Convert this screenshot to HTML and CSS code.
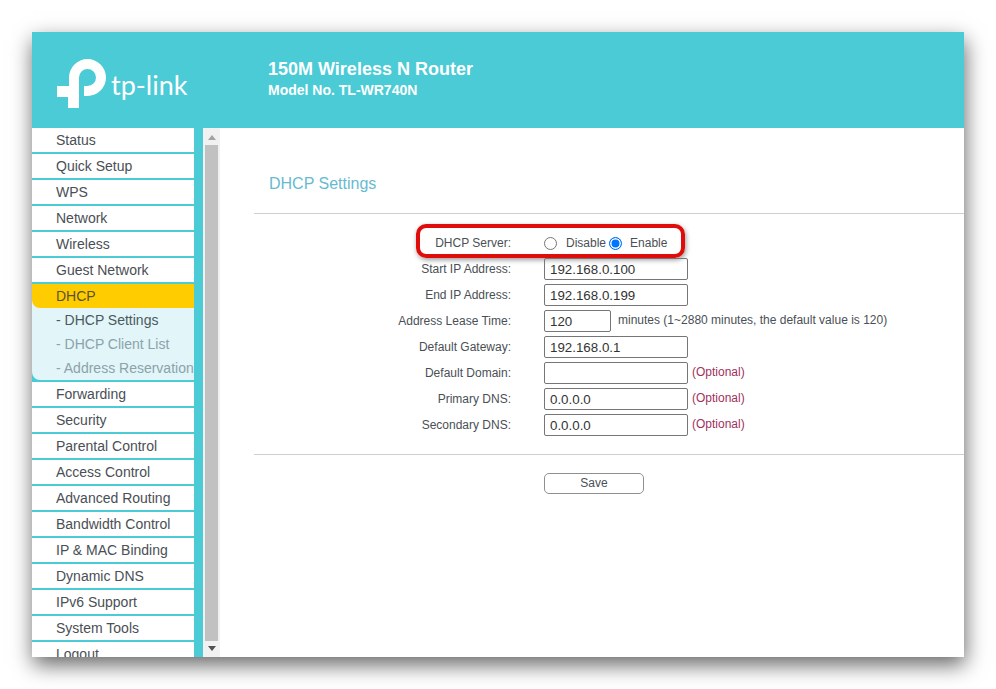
FILE: index.html
```html
<!DOCTYPE html>
<html lang="en">
<head>
<meta charset="utf-8">
<title>TL-WR740N</title>
<link rel="stylesheet" href="styles.css">
</head>
<body>
<div class="window">
  <header class="top">
    <div class="logo">
      <svg class="mark" viewBox="0 0 50 50" width="50" height="50">
        <path fill="#fff" d="M12 27V18.500A18.500 18.500 0 1 1 30.500 37H27V27H30.500A8.500 8.500 0 1 0 22 18.500V49H11V38H0V27Z"/>
      </svg>
      <span class="wordmark">tp-link</span>
    </div>
    <div class="model">
      <div class="model-name">150M Wireless N Router</div>
      <div class="model-no">Model No. TL-WR740N</div>
    </div>
  </header>
  <div class="body">
    <nav class="side">
      <a class="item">Status</a>
      <a class="item">Quick Setup</a>
      <a class="item">WPS</a>
      <a class="item">Network</a>
      <a class="item">Wireless</a>
      <a class="item">Guest Network</a>
      <div class="group">
        <a class="item active">DHCP</a>
        <a class="sub current">- DHCP Settings</a>
        <a class="sub">- DHCP Client List</a>
        <a class="sub">- Address Reservation</a>
      </div>
      <a class="item">Forwarding</a>
      <a class="item">Security</a>
      <a class="item">Parental Control</a>
      <a class="item">Access Control</a>
      <a class="item">Advanced Routing</a>
      <a class="item">Bandwidth Control</a>
      <a class="item">IP &amp; MAC Binding</a>
      <a class="item">Dynamic DNS</a>
      <a class="item">IPv6 Support</a>
      <a class="item">System Tools</a>
      <a class="item">Logout</a>
    </nav>
    <div class="gutter"></div>
    <div class="scrollbar">
      <span class="arrow up"></span>
      <span class="thumb"></span>
      <span class="arrow down"></span>
    </div>
    <main class="content">
      <h1 class="title">DHCP Settings</h1>
      <hr class="rule">
      <div class="form">
        <div class="row highlighted">
          <span class="label">DHCP Server:</span>
          <span class="radios">
            <span class="radio"></span><span class="radio-text">Disable</span>
            <span class="radio on"></span><span class="radio-text">Enable</span>
          </span>
          <span class="ring"></span>
        </div>
        <div class="row"><span class="label">Start IP Address:</span><span class="field">192.168.0.100</span></div>
        <div class="row"><span class="label">End IP Address:</span><span class="field">192.168.0.199</span></div>
        <div class="row"><span class="label">Address Lease Time:</span><span class="field short">120</span><span class="note">minutes (1~2880 minutes, the default value is 120)</span></div>
        <div class="row"><span class="label">Default Gateway:</span><span class="field">192.168.0.1</span></div>
        <div class="row"><span class="label">Default Domain:</span><span class="field"></span><span class="opt">(Optional)</span></div>
        <div class="row"><span class="label">Primary DNS:</span><span class="field">0.0.0.0</span><span class="opt">(Optional)</span></div>
        <div class="row"><span class="label">Secondary DNS:</span><span class="field">0.0.0.0</span><span class="opt">(Optional)</span></div>
      </div>
      <hr class="rule second">
      <div class="actions"><span class="save">Save</span></div>
    </main>
  </div>
</div>
</body>
</html>
```
FILE: styles.css
```css
* { box-sizing: border-box; }
html, body { margin: 0; height: 100%; background: #fff; overflow: hidden; }
body { padding: 32px; font-family: "Liberation Sans", Arial, sans-serif; }
.window {
  width: 932px;
  height: 625px;
  display: flex;
  flex-direction: column;
  background: #fff;
  overflow: hidden;
  box-shadow: 1px 8px 20px rgba(0, 0, 0, .6);
}
.top {
  height: 96px;
  flex: none;
  background: #4acbd6;
  display: flex;
  align-items: flex-start;
  color: #fff;
}
.logo { width: 236px; padding: 27px 0 0 25px; display: flex; align-items: flex-start; flex: none; }
.mark { flex: none; display: block; }
.wordmark {
  font-family: "Lato", sans-serif;
  font-weight: 400;
  font-size: 27px;
  line-height: 30px;
  margin: 11px 0 0 4px;
}
.model { padding-top: 27px; font-weight: 700; }
.model-name { font-size: 18px; line-height: 21px; }
.model-no { font-size: 14px; line-height: 16px; margin-top: 2px; }
.body { flex: 1; min-height: 0; display: flex; }
.side { width: 162px; flex: none; overflow: hidden; background: #4acbd6; font-size: 14px; color: #4a4f55; }
.item {
  display: block;
  height: 24px;
  line-height: 24px;
  padding-left: 24px;
  margin-bottom: 2px;
  background: #fff;
}
.group { margin-bottom: 2px; background: #e2f5f8; border-radius: 0 0 0 8px; overflow: hidden; }
.item.active { background: #ffcc00; margin: 0; border-radius: 0 0 0 8px; color: #5a5230; }
.sub {
  display: block;
  height: 24px;
  line-height: 24px;
  padding-left: 24px;
  white-space: nowrap;
  overflow: hidden;
  color: #8ba3aa;
}
.sub.current { color: #4a5a60; }
.gutter { width: 9px; flex: none; background: #4acbd6; }
.scrollbar {
  width: 17px;
  flex: none;
  background: #f1f1f1;
  display: flex;
  flex-direction: column;
  align-items: center;
}
.arrow { flex: none; width: 0; height: 0; border-left: 4px solid transparent; border-right: 4px solid transparent; }
.arrow.up { margin: 7px 0 5px; border-bottom: 5px solid #a3a3a3; }
.arrow.down { margin: 5px 0 6px; border-top: 5px solid #505050; }
.thumb { width: 13px; flex: 1; background: #c1c1c1; }
.content { flex: 1; min-width: 0; padding: 46px 0 0 34px; color: #4a4f55; }
.title { margin: 0 0 20px 15px; font-size: 16px; line-height: 19px; font-weight: 400; color: #67bbcf; }
.rule { margin: 0; height: 1px; border: 0; background: #cfcfcf; }
.form { padding-top: 16px; font-size: 12px; }
.row { position: relative; height: 26px; display: flex; align-items: flex-start; }
.label { width: 257px; flex: none; text-align: right; line-height: 22px; }
.row .field { margin-left: 33px; }
.field {
  width: 144px;
  height: 22px;
  flex: none;
  border: 1px solid #767676;
  border-radius: 2px;
  padding-left: 5px;
  font-size: 13.330px;
  line-height: 21px;
  color: #333;
  white-space: nowrap;
}
.field.short { width: 67px; }
.note { margin-left: 7px; line-height: 20px; }
.opt { margin-left: 4px; line-height: 20px; color: #a03060; }
.radios { margin-left: 33px; display: flex; align-items: center; height: 22px; }
.radio {
  width: 13px;
  height: 13px;
  border-radius: 50%;
  border: 1px solid #767676;
  background: #fff;
  flex: none;
}
.radio.on { border: 1px solid #0075ff; box-shadow: inset 0 0 0 1.500px #fff; background: #0075ff; }
.radio-text { margin: 0 3px 0 9px; }
.radio.on + .radio-text { margin-left: 8px; }
.highlighted { height: 28px; }
.highlighted .label, .highlighted .radios { margin-top: 2px; }
.ring {
  position: absolute;
  left: 162px;
  top: -6px;
  width: 269px;
  height: 34px;
  border: 4px solid #e00b0b;
  border-radius: 10px;
  box-shadow: 1px 2px 5px rgba(0, 0, 0, .4);
}
.rule.second { margin-top: 14px; }
.actions { padding: 18px 0 0 290px; }
.save {
  display: block;
  width: 100px;
  height: 21px;
  line-height: 19px;
  border: 1px solid #8f8f8f;
  border-radius: 5px;
  background: #fff;
  text-align: center;
  font-size: 12px;
}
```
